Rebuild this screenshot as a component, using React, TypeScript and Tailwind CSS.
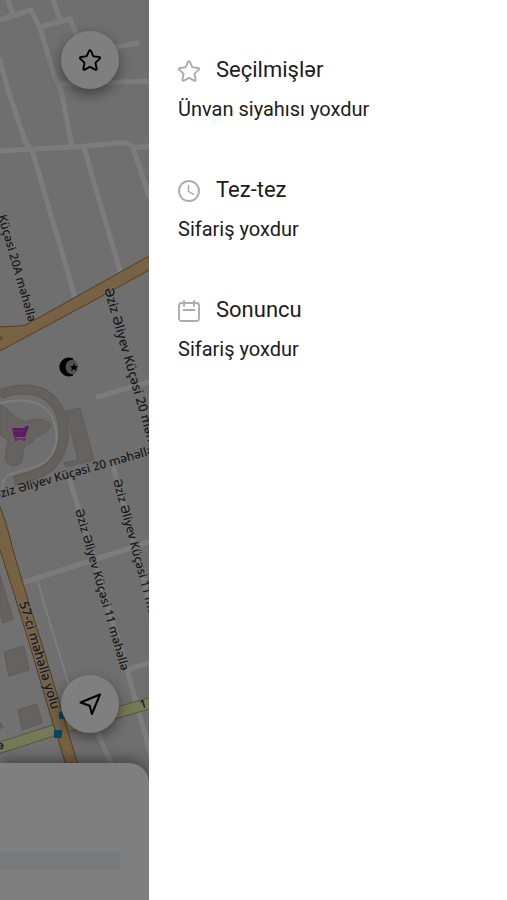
import React from "react";

const STAR_PATH =
  "M12 1.8c.5 0 .8.3 1 .7l2.3 5.2c.1.3.4.5.7.5l5.6.6c1 .1 1.3 1.1.6 1.8l-4.1 3.9c-.3.3-.4.6-.3 1l1.1 5.5c.2 1-.7 1.6-1.5 1.1l-4.8-2.6c-.4-.2-.8-.2-1.2 0l-4.8 2.6c-.8.5-1.7-.1-1.5-1.1l1.1-5.5c.1-.4 0-.7-.3-1L1.8 10.6c-.7-.7-.4-1.7.6-1.8L8 8.2c.3 0 .6-.2.7-.5L11 2.5c.2-.4.5-.7 1-.7z";

const StarIcon = ({ className }: { className?: string }) => (
  <svg viewBox="0.5 0.5 23 23" fill="none" stroke="currentColor" strokeWidth="2" className={className} aria-hidden="true">
    <path d={STAR_PATH} strokeLinejoin="round" />
  </svg>
);

const ClockIcon = ({ className }: { className?: string }) => (
  <svg viewBox="0 0 22 22" fill="none" stroke="currentColor" strokeWidth="1.9" className={className} aria-hidden="true">
    <circle cx="11" cy="11" r="10" />
    <path d="M10.5 5.5v5.8l5 3" strokeWidth="1.5" strokeLinecap="round" strokeLinejoin="round" />
  </svg>
);

const CalendarIcon = ({ className }: { className?: string }) => (
  <svg viewBox="0 0 22 22" fill="none" stroke="currentColor" strokeWidth="1.9" className={className} aria-hidden="true">
    <rect x="1" y="3" width="20" height="18" rx="2.5" />
    <path d="M6 1v5M16 1v5M5.5 10h11" strokeLinecap="round" />
  </svg>
);

const LocateIcon = ({ className }: { className?: string }) => (
  <svg viewBox="0 0 24 24" fill="none" stroke="currentColor" strokeWidth="2" className={className} aria-hidden="true">
    <path d="M22 2.5L2.5 10.5l9.2 3.2 2.2 8.3z" strokeLinejoin="round" />
  </svg>
);

const sections = [
  { title: "Seçilmişlər", empty: "Ünvan siyahısı yoxdur", Icon: StarIcon },
  { title: "Tez-tez", empty: "Sifariş yoxdur", Icon: ClockIcon },
  { title: "Sonuncu", empty: "Sifariş yoxdur", Icon: CalendarIcon },
];

const streets = [
  "M8 0l5 15",
  "M0 20l31-10 9 18 14 47 7 15 11 57",
  "M53 0l7 19",
  "M40 27l30-8 8 20",
  "M108 49l29-6",
  "M62 84l87-3",
  "M0 60l8 30 16 48q3 8 8 12l43 147",
  "M0 151l32-2 43-2 43-4q10-1 16 5l15-2",
  "M84 148l36 123",
  "M133 148l16 48",
  "M98 397l51-15",
  "M70 480l57 190 24 85",
  "M113 465l36 135",
  "M25 582l124-40",
  "M127 670l22-7",
  "M98 734l14 31",
];

const labels = [
  { x: -2, y: 216, angle: 74, size: 12, text: "Küçəsi 20A məhəllə" },
  { x: 104, y: 289, angle: 74, size: 13, text: "Əziz Əliyev Küçəsi 20 məhəllə" },
  { x: -7, y: 500, angle: -16, size: 12, text: "Əziz Əliyev Küçəsi 20 məhəllə" },
  { x: 75, y: 510, angle: 74, size: 12, text: "Əziz Əliyev Küçəsi 11 məhəllə" },
  { x: 113, y: 480, angle: 75, size: 12, text: "Əziz Əliyev Küçəsi 11 məhəllə" },
  { x: 19, y: 603, angle: 73, size: 13, text: "57-ci məhəllə yolu" },
  { x: 141, y: 709, angle: -16, size: 12, text: "1" },
  { x: -2, y: 750, angle: -16, size: 12, text: "ə" },
];

const CityMap = () => (
  <svg viewBox="0 0 149 900" preserveAspectRatio="xMinYMin slice" className="absolute inset-0 h-full w-full" aria-hidden="true">
    <rect width="149" height="900" fill="#dfdfdf" />
    <path d="M0 520l20 80 40 165H0z" fill="#e5e3e3" />

    {/* buildings */}
    <g fill="#cdc5bf" stroke="#bfb5ae" strokeWidth="1">
      <path d="M0 575l13 44-10 4-3-12z" />
      <path d="M4 652l20-6 5 24-20 6z" />
      <path d="M18 710l19-6 5 19-20 7z" />
      <path d="M0 722l3 5-3 2z" />
      <path d="M66 411l14-3 14 52-28 7-2-4 14-3z" />
      <path d="M0 405q5 1 9 6 7 7 12 9 5 3 10 0 9-2 13 0 6 2 7 6-2 5-11 9-5 2-7 7-6 2-9 5l-2 14q-3 5-8 5-7-1-9-7l3-19-8-5z" />
    </g>
    <path d="M0 394q43-14 59 16 12 32-6 53-8 11-39 18" fill="none" stroke="#bbb2a9" strokeWidth="10" />
    <path d="M0 394q43-14 59 16 12 32-6 53-8 11-39 18" fill="none" stroke="#c8c0b8" strokeWidth="8" />
    <path d="M0 403q38-9 52 13 10 24-2 41-6 8-25 13l-17 5q-5 3-6 15" fill="none" stroke="#f8f8f8" strokeWidth="2" />

    <g fill="none" stroke="#f8f8f8" strokeWidth="5" strokeLinecap="round" strokeLinejoin="round">
      {streets.map((d) => (
        <path key={d} d={d} />
      ))}
      <path d="M38 582l5 18 28 92" strokeWidth="2" />
    </g>

    {/* main roads */}
    <path d="M-10 751l65-21 110-31" fill="none" stroke="#a8ac78" strokeWidth="12" />
    <path d="M-10 751l65-21 110-31" fill="none" stroke="#edf2b0" strokeWidth="10" />
    <g fill="#efc486" stroke="#a27c3b" strokeWidth="1">
      <path d="M151 255L31 322q-5 4-12 4l-21 1v25L93 301l58-32z" />
      <path d="M-2 501l8 22 9 34 13 43 17 54 16 54 18 60H67l-18-58-16-54-17-56-16-50-2-3z" />
    </g>
    <path d="M0 337l3 1-3 2" fill="none" stroke="#a27c3b" />
    <path d="M59 712l6-1v8h-6zM54 730h8v8h-8z" fill="#0092da" />

    <g fontFamily="'Noto Sans', sans-serif" fontWeight="500" fill="#333" stroke="#e8e8e8" strokeOpacity=".5" strokeWidth="2" paintOrder="stroke">
      {labels.map(({ x, y, angle, size, text }) => (
        <text key={`${x}-${y}`} transform={`translate(${x} ${y}) rotate(${angle})`} fontSize={size}>
          {text}
        </text>
      ))}
    </g>

    {/* mosque */}
    <circle cx="69" cy="367" r="9" fill="#a89d92" />
    <path d="M73 359a9 9 0 1 0 0 16 8 8 0 1 1 0-16z" fill="#000" stroke="#000" />
    <path d="M74 363l1 3h3l-2 2 1 3-3-2-3 2 1-3-2-2h3z" fill="#000" />

    {/* shop */}
    <path d="M12 428h12l2-2h3l-4 11H14z" fill="#b23ac0" />
    <path d="M14 437l1 2h11" fill="none" stroke="#b23ac0" />
    <path d="M12 431h13" stroke="#d49ada" strokeWidth=".5" />
    <circle cx="16" cy="440" r="1" fill="#b23ac0" />
    <circle cx="24" cy="440" r="1" fill="#b23ac0" />
  </svg>
);

const App = () => {
  return (
    <div className="flex min-h-screen bg-white font-['Roboto',sans-serif] text-[#1c1c1c]">
      <div className="relative flex w-[149px] shrink-0 flex-col overflow-hidden">
        <CityMap />

        <div className="relative flex flex-1 flex-col items-end justify-between px-[30px] pt-[31px] pb-[30px]">
          <button aria-label="Seçilmişlər" className="flex size-[58px] items-center justify-center rounded-full bg-white text-black shadow-[0_5px_14px_rgba(0,0,0,0.45)]">
            <StarIcon className="size-[22px]" />
          </button>
          <button aria-label="Mövqeyim" className="flex size-[58px] items-center justify-center rounded-full bg-white text-black shadow-[0_5px_14px_rgba(0,0,0,0.45)]">
            <LocateIcon className="size-6" />
          </button>
        </div>

        <div className="relative h-[137px] rounded-tr-[20px] bg-white pt-[89px] pr-[29px] shadow-[0_-2px_16px_rgba(0,0,0,0.5)]">
          <div className="h-[18px] bg-[#f0f4f7]" />
        </div>

        {/* backdrop */}
        <div className="absolute inset-0 bg-black/50" />
      </div>

      <aside className="flex flex-1 flex-col gap-[52px] bg-white px-[29px] pt-[53px]">
        {sections.map(({ title, empty, Icon }) => (
          <section key={title}>
            <h2 className="flex h-8 items-center gap-4 text-[22px]">
              <Icon className="mt-1 size-[22px] shrink-0 text-[#adadad]" />
              {title}
            </h2>
            <p className="mt-3 text-xl leading-6">{empty}</p>
          </section>
        ))}
      </aside>
    </div>
  );
};

export default App;
